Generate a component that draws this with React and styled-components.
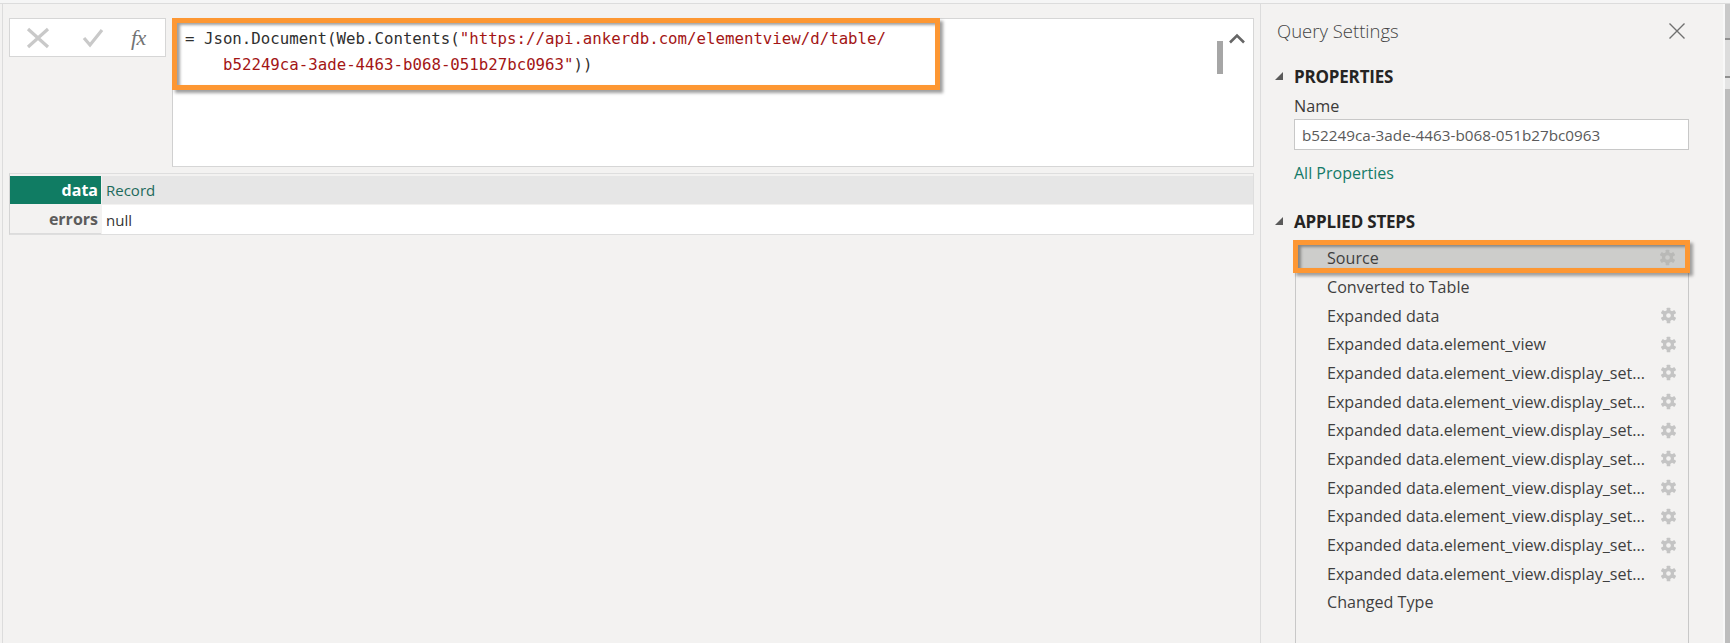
import React from "react";
import styled, { createGlobalStyle } from "styled-components";

const Global = createGlobalStyle`
  html, body { margin: 0; padding: 0; background: #f3f2f1; overflow: hidden; }
  #root { height: 643px; }
  * { box-sizing: border-box; }
`;

const UI = `"Open Sans", "Noto Sans", sans-serif`;
const ORANGE = "#fd9733";

const Page = styled.div`
  width: 1730px; height: 643px; display: flex; flex-direction: column;
  font-family: ${UI}; background: #f3f2f1; color: #3b3a39;
`;
const TopEdge = styled.div`
  flex: 0 0 4px; background: #f5f5f5; border-bottom: 1px solid #dcdcdc;
`;
const Body = styled.div`
  flex: 1; display: flex; min-height: 0;
`;
const Main = styled.main`
  flex: 0 0 1258px; margin-left: 2px; border-left: 1px solid #dcdcdc;
  padding: 14px 6px 0 6px;
`;
const FormulaRow = styled.div`
  display: flex; gap: 6px; height: 149px;
`;
const CommandBox = styled.div`
  flex: 0 0 157px; height: 39px; background: #fff; border: 1px solid #d6d6d6;
  display: flex; align-items: center; padding-left: 16px;
`;
const CmdIcon = styled.svg`
  width: 24px; height: 24px; margin-right: ${p => p.$gap}px; flex: none;
  fill: none; stroke: #c9c9c9; stroke-width: 3.2;
`;
const Fx = styled.span`
  font-family: "Liberation Serif", serif; font-style: italic; font-size: 22px;
  color: #737373; line-height: 1; letter-spacing: -0.5px;
`;
const FormulaBox = styled.div`
  flex: 1; display: flex; align-items: flex-start; background: #fff;
  border: 1px solid #d6d6d6; border-left-color: #d0d0d0; padding-right: 8px;
`;
const Highlight = styled.div`
  width: 768px; height: 72px; margin: -1px 0 0 -1px;
  border: 5px solid ${ORANGE};
  box-shadow: 3px 3px 3px rgba(0,0,0,.38), inset 3px 2px 3px rgba(0,0,0,.38);
  padding: 3px 0 0 8px;
`;
const CodeLine = styled.div`
  font-family: "DejaVu Sans Mono", "Liberation Mono", monospace;
  font-size: 15.74px; line-height: 26px; height: 26px; white-space: pre;
  color: #2f2f2f; padding-left: ${p => (p.$indent ? 38 : 0)}px;
`;
const Str = styled.span`
  color: #a31515;
`;
const ScrollArea = styled.div`
  margin-left: auto; display: flex; align-items: flex-start; gap: 6px; padding-top: 14px;
`;
const Thumb = styled.div`
  width: 6px; height: 33px; margin-top: 8px; background: #a6a6a6;
`;
const Chevron = styled.svg`
  width: 16px; height: 11px; fill: none; stroke: #666; stroke-width: 2.6;
`;
const DataTable = styled.div`
  margin-top: 6px; height: 62px; padding: 2px 0 0 0;
  border: 1px solid #dedede; border-left-color: #d4d4d4; border-right-color: #dedede;
  display: grid; grid-template-rows: 28px 29px; row-gap: 1px;
`;
const TableRow = styled.div`
  display: grid; grid-template-columns: 91px 1fr; column-gap: 1px;
`;
const RowLabel = styled.div`
  display: flex; align-items: center; justify-content: flex-end; padding-right: 3px;
  font-size: 16px; font-weight: 700;
  background: ${p => (p.$active ? "#107c63" : "#f3f2f1")};
  color: ${p => (p.$active ? "#fff" : "#5c5c5c")};
  border-bottom: ${p => (p.$active ? "none" : "1px solid #dcdcdc")};
`;
const RowValue = styled.div`
  display: flex; align-items: center; padding-left: 4px; font-size: 15px;
  background: ${p => (p.$active ? "#e6e6e6" : "#fff")};
  color: ${p => (p.$active ? "#1d6a5c" : "#333")};
`;
const Aside = styled.aside`
  flex: 0 0 465px; border-left: 1px solid #dcdcdc; padding-left: 16px;
  display: flex; flex-direction: column; background: #f3f2f1;
  border-right: 2px solid #f8f8f8;
`;
const AsideHeader = styled.header`
  flex: 0 0 54px; margin-bottom: 8px; display: flex; align-items: center;
  justify-content: space-between; padding-right: 37px;
`;
const AsideTitle = styled.h1`
  margin: 0; font-size: 18.5px; font-weight: 300; color: #444; line-height: 24px;
`;
const CloseIcon = styled.svg`
  width: 18px; height: 18px; fill: none; stroke: #707070; stroke-width: 1.4;
`;
const SectionHead = styled.div`
  height: 22px; display: flex; align-items: center; gap: 11px;
  margin-top: ${p => p.$top || 0}px; margin-left: -2px;
`;
const Caret = styled.span`
  flex: none; width: 0; height: 0; margin-top: -3px;
  border-left: 8px solid transparent; border-bottom: 8px solid #5a5a5a;
`;
const SectionTitle = styled.h2`
  margin: 0; font-size: 17px; line-height: 22px; font-weight: 700; color: #252423; letter-spacing: -0.2px;
`;
const Indented = styled.div`
  margin-left: 17px;
`;
const FieldLabel = styled.div`
  margin-top: 7px; line-height: 22px; font-size: 16.2px; color: #3b3a39;
`;
const NameField = styled.div`
  margin-top: 2px; width: 395px; height: 31px; background: #fff; border: 1px solid #c8c8c8;
  padding-left: 7px; display: flex; align-items: center; font-size: 15.25px; color: #5a5a5a;
`;
const LinkText = styled.a`
  display: block; margin-top: 12px; line-height: 22px; font-size: 16px; color: #147a68;
`;
const StepList = styled.ul`
  list-style: none; flex: 1; margin: 7px 0 0 18px; padding: 0; width: 394px;
  border-left: 1px solid #c8c8c8; border-right: 1px solid #c8c8c8;
`;
const Step = styled.li`
  height: 28.7px; display: flex; align-items: center; justify-content: space-between;
  padding: 0 11px 1px 31px; font-size: 16.1px; line-height: 22px; color: #3f3f3f; white-space: nowrap;
`;
const SelectedStep = styled(Step)`
  height: 33px; margin: 0 -2px 0 -3px; padding: 2px 9px 0 29px;
  border: 5px solid ${ORANGE}; background: #cdcdcb;
  box-shadow: 3px 3px 3px rgba(0,0,0,.35), inset 3px 2px 3px rgba(0,0,0,.35);
`;
const GearIcon = styled.svg`
  width: 17px; height: 17px; flex: none; fill: ${p => (p.$dim ? "#b9b9b7" : "#c4c4c4")};
`;
const Gutter = styled.div`
  flex: 1; display: flex; flex-direction: column;
`;
const GutterPart = styled.div`
  flex: ${p => (p.$h ? `0 0 ${p.$h}px` : 1)}; background: ${p => p.$c};
`;

const Gear = ({ dim }) => (
  <GearIcon viewBox="0 0 16 16" $dim={dim}>
    {[0, 60, 120, 180, 240, 300].map(a => (
      <rect key={a} x="6.3" y="0.6" width="3.4" height="4" rx="0.6" transform={`rotate(${a} 8 8)`} />
    ))}
    <path fillRule="evenodd" d="M8 2.8a5.2 5.2 0 1 0 0 10.4A5.2 5.2 0 0 0 8 2.8zm0 3a2.2 2.2 0 1 1 0 4.4 2.2 2.2 0 0 1 0-4.4z" />
  </GearIcon>
);

const steps = [
  ["Converted to Table", false],
  ["Expanded data", true],
  ["Expanded data.element_view", true],
  ...Array.from({ length: 8 }, () => ["Expanded data.element_view.display_set...", true]),
  ["Changed Type", false],
];

export default function App() {
  return (
    <Page>
      <Global />
      <TopEdge />
      <Body>
        <Main>
          <FormulaRow>
            <CommandBox>
              <CmdIcon viewBox="0 0 24 24" $gap={31}>
                <path d="M2 3l20 18M22 3L2 21" />
              </CmdIcon>
              <CmdIcon viewBox="0 0 24 24" $gap={26}>
                <path d="M3 12l6 7L21 4" />
              </CmdIcon>
              <Fx>fx</Fx>
            </CommandBox>
            <FormulaBox>
              <Highlight>
                <CodeLine>= Json.Document(Web.Contents(<Str>"https://api.ankerdb.com/elementview/d/table/</Str></CodeLine>
                <CodeLine $indent><Str>b52249ca-3ade-4463-b068-051b27bc0963"</Str>))</CodeLine>
              </Highlight>
              <ScrollArea>
                <Thumb />
                <Chevron viewBox="0 0 16 11"><path d="M1 9.5L8 2.5l7 7" /></Chevron>
              </ScrollArea>
            </FormulaBox>
          </FormulaRow>
          <DataTable>
            <TableRow>
              <RowLabel $active>data</RowLabel>
              <RowValue $active>Record</RowValue>
            </TableRow>
            <TableRow>
              <RowLabel>errors</RowLabel>
              <RowValue>null</RowValue>
            </TableRow>
          </DataTable>
        </Main>
        <Aside>
          <AsideHeader>
            <AsideTitle>Query Settings</AsideTitle>
            <CloseIcon viewBox="0 0 18 18"><path d="M1.5 1.5l15 15M16.5 1.5l-15 15" /></CloseIcon>
          </AsideHeader>
          <SectionHead><Caret /><SectionTitle>PROPERTIES</SectionTitle></SectionHead>
          <Indented>
            <FieldLabel>Name</FieldLabel>
            <NameField>b52249ca-3ade-4463-b068-051b27bc0963</NameField>
            <LinkText>All Properties</LinkText>
          </Indented>
          <SectionHead $top={27}><Caret /><SectionTitle>APPLIED STEPS</SectionTitle></SectionHead>
          <StepList>
            <SelectedStep>Source<Gear dim /></SelectedStep>
            {steps.map(([label, gear], i) => (
              <Step key={i}>{label}{gear && <Gear />}</Step>
            ))}
          </StepList>
        </Aside>
        <Gutter>
          <GutterPart $h={34} $c="#c9c9c9" />
          <GutterPart $h={2} $c="#8f8f8f" />
          <GutterPart $h={36} $c="#dcdcdc" />
          <GutterPart $h={2} $c="#8f8f8f" />
          <GutterPart $h={11} $c="#e4e4e4" />
          <GutterPart $c="#bdbdbd" />
        </Gutter>
      </Body>
    </Page>
  );
}
